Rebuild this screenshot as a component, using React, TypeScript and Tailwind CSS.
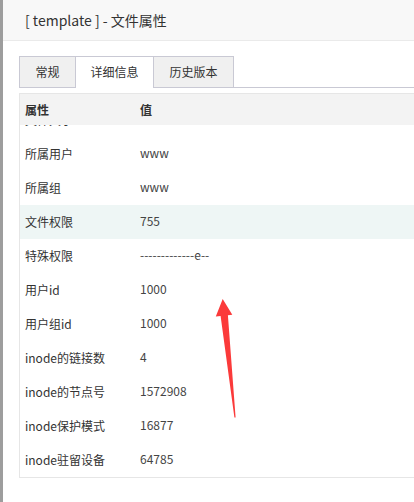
const rows: { label: string; value: string; active?: boolean }[] = [
  { label: '文件大小', value: '' },
  { label: '所属用户', value: 'www' },
  { label: '所属组', value: 'www' },
  { label: '文件权限', value: '755', active: true },
  { label: '特殊权限', value: '-------------e--' },
  { label: '用户id', value: '1000' },
  { label: '用户组id', value: '1000' },
  { label: 'inode的链接数', value: '4' },
  { label: 'inode的节点号', value: '1572908' },
  { label: 'inode保护模式', value: '16877' },
  { label: 'inode驻留设备', value: '64785' },
]

const tabs = [
  { name: '常规', w: 'w-[57px]' },
  { name: '详细信息', w: 'w-[79px]', active: true },
  { name: '历史版本', w: 'w-[81px]' },
]

export default function App() {
  return (
    <div
      className='relative flex w-[414px] h-[502px] overflow-hidden bg-white text-[#333]'
      style={{ fontFamily: '"Noto Sans CJK SC", "Noto Sans", sans-serif' }}
    >
      {/* page behind the dialog */}
      <div className='w-[3px] h-full bg-[#9d9d9d] shrink-0' />

      <div className='flex-1 flex flex-col min-w-0'>
        {/* Title bar */}
        <div className='h-[41px] shrink-0 flex items-center pl-[22px] bg-[#f8f8f8] border-b border-[#eaeaea] text-[14px] text-[#333]'>
          [ template ] - 文件属性
        </div>

        {/* Tabs */}
        <div className='mt-[16px] ml-[16px] flex items-end border-b border-[#c9c9d4] h-[31px]'>
          {tabs.map((t, i) => (
            <div
              key={t.name}
              className={`${t.w} ${i > 0 ? '-ml-px' : ''} h-[31px] flex items-center justify-center text-[12px] border border-b-0 border-[#c9c9d4] ${
                t.active ? 'bg-white relative top-px h-[32px] pb-px text-[#333]' : 'bg-[#f0f0f0] text-[#333]'
              }`}
            >
              {t.name}
            </div>
          ))}
        </div>

        {/* Detail table */}
        <div className='mt-[5px] ml-[16px] w-[420px] border border-[#e6e6e6] text-[12px]'>
          <div className='relative z-10 h-[31px] flex items-center bg-[#f3f3f3] font-semibold text-[#333]'>
            <div className='w-[120px] pl-[5px]'>属性</div>
            <div>值</div>
          </div>
          <div className='h-[352px] overflow-hidden'>
            <div className='-mt-[22px]'>
              {rows.map(r => (
                <div
                  key={r.label}
                  className={`h-[34px] flex items-center ${r.active ? 'bg-[#eef6f5]' : 'bg-white'}`}
                >
                  <div className='w-[120px] pl-[5px] text-[#333]'>{r.label}</div>
                  <div className='text-[#444] -mt-[3px]'>{r.value}</div>
                </div>
              ))}
            </div>
          </div>
        </div>
      </div>

      {/* red annotation arrow */}
      <svg className='absolute left-0 top-0 pointer-events-none' width='414' height='502'>
        <polygon
          points='222.7,299 232.3,314.8 227.9,315.2 235.6,417.5 234.4,417.5 220.6,316 215.8,316.4'
          fill='#fb3a3a'
        />
      </svg>
    </div>
  )
}
